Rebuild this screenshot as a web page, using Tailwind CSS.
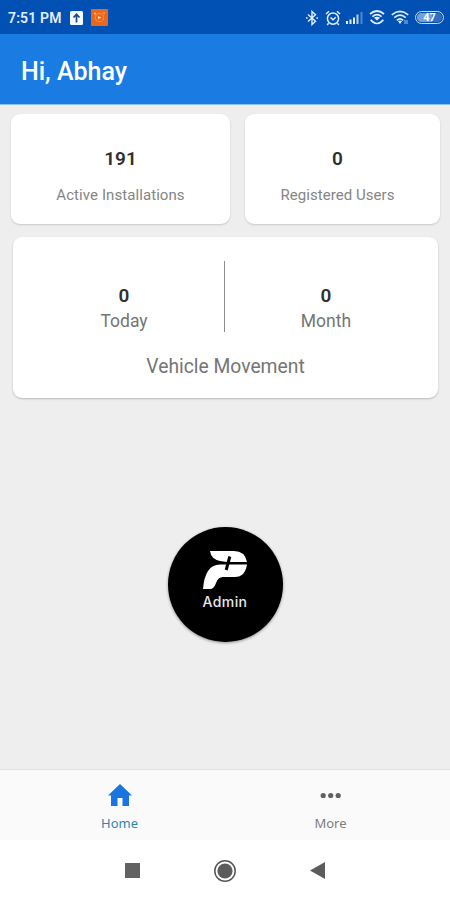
<!DOCTYPE html>
<html lang="en">
<head>
  <meta charset="UTF-8">
  <meta name="viewport" content="width=device-width, initial-scale=1.0">
  <title>Admin Dashboard</title>
  <script src="https://cdn.jsdelivr.net/npm/@tailwindcss/browser@4"></script>
</head>
<body class="w-[450px] h-[900px] flex flex-col overflow-hidden bg-[#eeeeee] font-['Roboto',sans-serif] text-[#757575]">
  <!-- Status Bar -->
  <div class="h-[34px] shrink-0 bg-[#0151b5] flex items-center pl-2 pr-[6px] pt-px text-[#e3effc]">
    <span class="w-[62px] text-[14px] leading-none font-semibold tracking-[0.15px] whitespace-nowrap">7:51 PM</span>
    <svg class="w-[13px] h-[14px]" viewBox="0 0 13 14">
      <rect width="13" height="14" rx="1.5" fill="#f4f9ff"/>
      <path d="M6.5 11.5V4M3.5 6.5L6.5 3.2L9.5 6.5" fill="none" stroke="#1c4a80" stroke-width="1.7"/>
    </svg>
    <svg class="w-[17px] h-[17px] ml-2" viewBox="0 0 17 17">
      <rect width="17" height="17" rx="1" fill="#e9681c"/>
      <circle cx="8.5" cy="8.5" r="4.2" fill="none" stroke="#f3924f" stroke-width="1"/>
      <path d="M7 7.2L10.5 8.5L7 10Z" fill="#ffe0c2"/>
      <circle cx="4" cy="4.5" r="1" fill="#ffc08d"/>
      <circle cx="13" cy="4" r="0.8" fill="#ffc08d"/>
    </svg>
    <svg class="w-[14px] h-[16px] ml-auto" viewBox="0 0 14 16" fill="none" stroke="currentColor" stroke-width="1.4">
      <path d="M3 4.5L10.5 11.2L7 14.5V1.5L10.5 4.8L3 11.5"/>
      <path d="M1 8H2.6M11.4 8H13"/>
    </svg>
    <svg class="w-4 h-4 ml-[6px]" viewBox="0 0 16 16" fill="none" stroke="currentColor" stroke-width="1.5">
      <circle cx="8" cy="8.6" r="5.6"/>
      <path d="M1 4L4 1.2M15 4L12 1.2M3.6 13.2L2.2 15M12.4 13.2L13.8 15M5.5 7.5L8 9.8L10.8 7.2"/>
    </svg>
    <svg class="w-[18px] h-[13px] ml-[5px]" viewBox="0 0 18 13" fill="currentColor">
      <rect x="0" y="10" width="2" height="3"/>
      <rect x="3.5" y="8.5" width="2" height="4.5"/>
      <rect x="7" y="6.5" width="2" height="6.5"/>
      <rect x="10.5" y="3.5" width="2" height="9.5" opacity=".8"/>
      <rect x="14.5" y="1" width="2" height="12" opacity=".35"/>
    </svg>
    <svg class="w-[16px] h-[15px] ml-[5px]" viewBox="0 0 16 15" fill="none" stroke="currentColor" stroke-width="1.7">
      <path d="M1 4Q8 -2 15 4M3.4 6.6Q8 2.8 12.6 6.6"/>
      <path d="M5 7.8Q8 5.8 11 7.8L8 10.4Z" fill="currentColor" stroke="none"/>
      <path d="M1.6 9.8L4 12Q8 15 12 12L14.4 9.8"/>
    </svg>
    <svg class="w-[18px] h-[15px] ml-[6px]" viewBox="0 0 18 15" fill="none" stroke="currentColor" stroke-width="1.7">
      <path d="M.8 4.8Q9 -2 17.2 4.8M3.3 7.6Q9 2.8 14.7 7.6M5.8 10.3Q9 7.6 12.2 10.3"/>
      <path d="M7 11.3Q9 9.8 11 11.3L9 14Z" fill="currentColor" stroke="none"/>
      <path d="M14 10V14M16 10V14" stroke-width="1" opacity=".7"/>
    </svg>
    <div class="w-[29px] h-[13px] ml-[6px] rounded-full border-[1.5px] border-[#c5dcf5] flex p-[1px]">
      <div class="w-full rounded-full bg-linear-to-r from-[#6fa0dc] from-60% to-[#2e6fc2] to-60% flex items-center justify-center text-[11px] leading-none font-bold text-white">47</div>
    </div>
  </div>

  <!-- Header -->
  <header class="h-[71px] shrink-0 bg-[#1a7be3] border-b border-[#8dc3f2] flex items-center pl-[21px] pt-[4px]">
    <h1 class="text-[25px] leading-none font-medium text-white">Hi, Abhay</h1>
  </header>

  <!-- Main Content -->
  <main class="flex-1 flex flex-col pt-[9px]">
    <div class="flex pl-[11px] gap-[15px]">
      <section class="w-[219px] h-[110px] bg-white rounded-[9px] shadow-[0_1px_2px_rgba(0,0,0,0.16)] flex flex-col items-center pt-[35px]">
        <p class="text-[19px] leading-5 font-semibold text-[#303030]">191</p>
        <p class="mt-[18px] text-[15px] leading-4 text-[#858585] tracking-[0.08px]">Active Installations</p>
      </section>
      <section class="w-[195px] h-[110px] bg-white rounded-[9px] shadow-[0_1px_2px_rgba(0,0,0,0.16)] flex flex-col items-center pt-[35px] pr-[10px]">
        <p class="text-[19px] leading-5 font-semibold text-[#303030]">0</p>
        <p class="mt-[18px] text-[15px] leading-4 text-[#858585] tracking-[0.05px]">Registered Users</p>
      </section>
    </div>

    <section class="ml-[13px] mt-[13px] w-[425px] h-[161px] bg-white rounded-[9px] shadow-[0_1px_2px_rgba(0,0,0,0.22)] pt-6">
      <div class="flex h-[71px]">
        <div class="w-[211px] pl-[11px] pt-[25px] flex flex-col items-center">
          <p class="text-[19px] leading-5 font-semibold text-[#303030]">0</p>
          <p class="mt-[5px] text-[17.5px] leading-5">Today</p>
        </div>
        <div class="w-px bg-[#8c8c8c]"></div>
        <div class="w-[213px] pr-[11px] pt-[25px] flex flex-col items-center">
          <p class="text-[19px] leading-5 font-semibold text-[#303030]">0</p>
          <p class="mt-[5px] text-[17.5px] leading-5">Month</p>
        </div>
      </div>
      <p class="mt-[23px] text-center text-[19.3px] leading-6">Vehicle Movement</p>
    </section>

    <!-- Admin button -->
    <button class="mt-[129px] mx-auto w-[115px] h-[115px] rounded-full bg-black shadow-[0_1px_3px_rgba(0,0,0,0.4)] flex flex-col items-center pt-[23px]">
      <svg class="w-[46px] h-[40px]" viewBox="0 0 46 40" fill="#ffffff">
        <path d="M8 1H32Q43 1 45 12H25L18 11Q9 9 8 1Z"/>
        <path d="M45 14.5Q43 27 33 27H21Q16 27 14 33Q12 39 8 39H1Q2 27 6 21Q10 14.5 18 14.5Z"/>
        <path d="M27.8 6.5L24.2 20" stroke="#000000" stroke-width="3"/>
      </svg>
      <span class="mt-[4px] font-['Inter',sans-serif] text-[14px] leading-4 font-medium text-[#e8e8e8] tracking-[0.4px]">Admin</span>
    </button>
  </main>

  <!-- Bottom Navigation -->
  <nav class="h-[71px] shrink-0 bg-[#fafafa] border-t border-[#e2e2e2] grid grid-cols-2 px-[14px] font-['Noto_Sans',sans-serif] text-[13px] leading-4">
    <a class="flex flex-col items-center text-[#3186b0] pt-[14px]">
      <svg class="w-6 h-[22px]" viewBox="0 0 24 22">
        <path d="M12 0L24 11.5H21V22H14.5V14H9.5V22H3V11.5H0Z" fill="#1a75e0"/>
      </svg>
      <span class="mt-[9px]">Home</span>
    </a>
    <a class="flex flex-col items-center text-[#7d7d7d] pt-[14px]">
      <svg class="w-6 h-[22px]" viewBox="0 0 24 22" fill="#606060">
        <circle cx="4.2" cy="11.5" r="2.6"/>
        <circle cx="11.7" cy="11.5" r="2.6"/>
        <circle cx="19.2" cy="11.5" r="2.6"/>
      </svg>
      <span class="mt-[9px]">More</span>
    </a>
  </nav>

  <!-- System buttons -->
  <footer class="h-[60px] shrink-0 bg-white flex items-center justify-center gap-[73px] pt-px">
    <div class="w-[15px] h-[15px] bg-[#626262]"></div>
    <svg class="w-[24px] h-[24px]" viewBox="0 0 24 24">
      <circle cx="12" cy="12" r="10.2" fill="none" stroke="#555555" stroke-width="1.5"/>
      <circle cx="12" cy="12" r="7.6" fill="#5c5c5c"/>
    </svg>
    <svg class="w-[15px] h-[17px]" viewBox="0 0 15 17">
      <path d="M0 8.5L15 0V17Z" fill="#5c5c5c"/>
    </svg>
  </footer>
</body>
</html>
